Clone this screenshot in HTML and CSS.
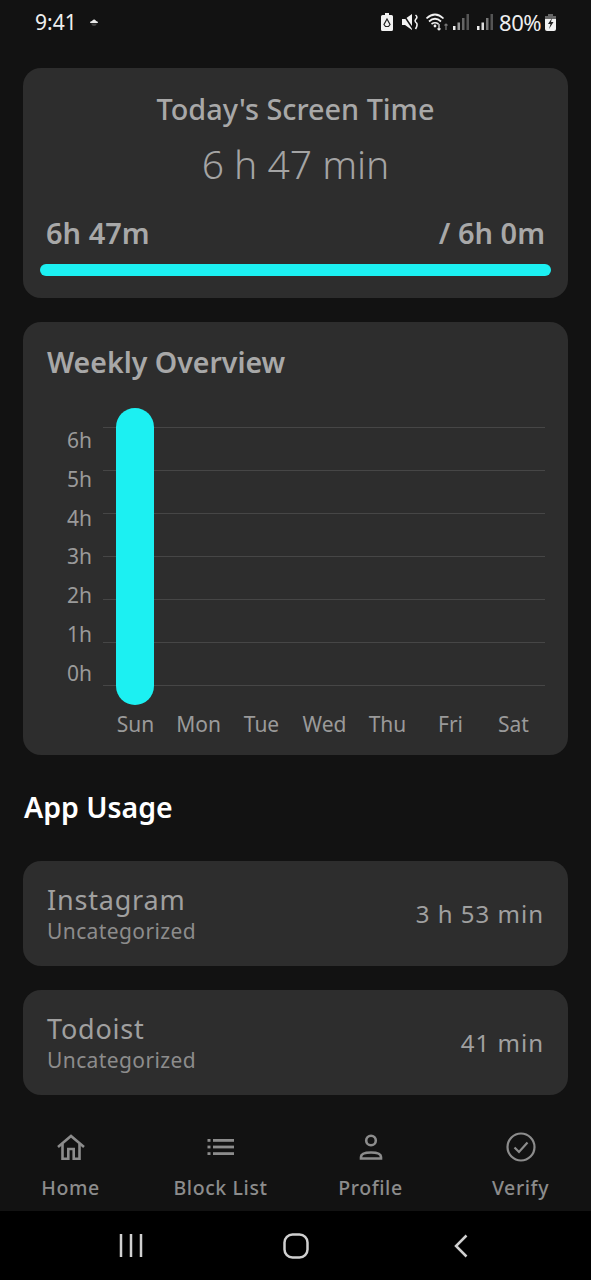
FILE: index.html
```html
<!DOCTYPE html>
<html lang="en">
  <head>
    <meta charset="UTF-8" />
    <meta name="viewport" content="width=device-width, initial-scale=1.0" />
    <title>Screen Time</title>
    <link rel="stylesheet" href="styles.css">
  </head>
  <body>
    <div class="status-bar">
      <div class="status-left">
        <span class="clock">9:41</span>
        <svg class="cloud" width="10" height="8" viewBox="0 0 10 8"><path d="M1 5 Q1 3 3 3 Q4 1 5.500 1.500 Q7 2 7 3 Q9 3 9 5 Z" fill="#e8e8e8"/><path d="M2 5.500 H8 Q7 8 5 8 Q3 8 2 5.500 Z" fill="#444"/></svg>
      </div>
      <div class="status-right">
        <svg width="12" height="18" viewBox="0 0 12 18"><path d="M4 0 H8 V2 H10.500 Q12 2 12 3.500 V16.500 Q12 18 10.500 18 H1.500 Q0 18 0 16.500 V3.500 Q0 2 1.500 2 H4 Z" fill="#f2f2f2"/><path d="M6 6 L9 11.500 L7.500 13.500 H4.500 L3 11.500 Z" fill="none" stroke="#222" stroke-width="1.200"/></svg>
        <svg class="gap-9" width="16" height="16" viewBox="0 0 16 16"><path d="M0 5 H3 L10 0 V16 L3 11 H0 Z" fill="#f2f2f2"/><path d="M1 0 L11 15" stroke="#121212" stroke-width="1.500"/><path d="M13.500 1 Q16 3 14 5 Q12 7 14.500 9 Q16 11 13.500 15" fill="none" stroke="#f2f2f2" stroke-width="1.600"/></svg>
        <svg class="gap-8" width="23" height="18" viewBox="0 0 23 18"><g fill="none" stroke="#f0f0f0" stroke-width="1.700"><path d="M0.500 5.500 Q9 -2.500 17.500 5.500"/><path d="M3 8.500 Q9 3 15 8.500"/><path d="M5.500 11 Q9 8.500 12.500 11"/></g><circle cx="9" cy="13" r="1.400" fill="#f0f0f0"/><path d="M20 17 V11 M18.500 12.500 L20 11 L21.500 12.500" fill="none" stroke="#777" stroke-width="1.200"/><path d="M13 11 V17 M11.500 15.500 L13 17 L14.500 15.500" fill="none" stroke="#eee" stroke-width="1.200"/></svg>
        <svg class="gap-4" width="16" height="16" viewBox="0 0 16 16"><rect x="0" y="12" width="2.500" height="4" fill="#eee"/><rect x="4.500" y="8.500" width="2.500" height="7.500" fill="#999"/><rect x="9" y="4" width="2.500" height="12" fill="#666"/><rect x="13.500" y="0" width="2.500" height="16" fill="#555"/></svg>
        <svg class="gap-8" width="16" height="16" viewBox="0 0 16 16"><rect x="0" y="12" width="2.500" height="4" fill="#eee"/><rect x="4.500" y="8.500" width="2.500" height="7.500" fill="#ddd"/><rect x="9" y="4" width="2.500" height="12" fill="#777"/><rect x="13.500" y="0" width="2.500" height="16" fill="#555"/></svg>
        <span class="battery-pct">80%</span>
        <svg width="11" height="17" viewBox="0 0 11 17"><path d="M3 0 H8 V2 H11 V5 H0 V2 H3 Z" fill="#666"/><path d="M0 5 H11 V15 Q11 17 9 17 H2 Q0 17 0 15 Z" fill="#f2f2f2"/><path d="M7 4 L3 10 H5.500 L4 15 L8.500 8 H6 Z" fill="#222"/></svg>
      </div>
    </div>

    <main class="content">
      <section class="card today">
        <h2 class="today-title">Today's Screen Time</h2>
        <div class="today-time">6 h 47 min</div>
        <div class="today-row">
          <span>6h 47m</span>
          <span>/ 6h 0m</span>
        </div>
        <div class="progress"></div>
      </section>

      <section class="card weekly">
        <h2 class="weekly-title">Weekly Overview</h2>
        <div class="chart">
          <div class="y-labels">
            <span>6h</span>
            <span>5h</span>
            <span>4h</span>
            <span>3h</span>
            <span>2h</span>
            <span>1h</span>
            <span>0h</span>
          </div>
          <div class="plot">
            <div class="line"></div>
            <div class="line"></div>
            <div class="line"></div>
            <div class="line"></div>
            <div class="line"></div>
            <div class="line"></div>
            <div class="line"></div>
            <div class="bar"></div>
          </div>
        </div>
        <div class="days">
          <span>Sun</span>
          <span>Mon</span>
          <span>Tue</span>
          <span>Wed</span>
          <span>Thu</span>
          <span>Fri</span>
          <span>Sat</span>
        </div>
      </section>

      <h2 class="usage-title">App Usage</h2>

      <section class="card app">
        <div>
          <div class="app-name">Instagram</div>
          <div class="app-cat">Uncategorized</div>
        </div>
        <div class="app-time">3 h 53 min</div>
      </section>

      <section class="card app">
        <div>
          <div class="app-name">Todoist</div>
          <div class="app-cat">Uncategorized</div>
        </div>
        <div class="app-time">41 min</div>
      </section>
    </main>

    <nav class="tabs">
      <div class="tab">
        <svg width="30" height="30" viewBox="0 0 30 30" fill="none" stroke="#8c8c8c" stroke-width="2.600"><path d="M2 15 L15 4 L28 15"/><path d="M6.500 12 V26.700 H12.300 V17 H17.700 V26.700 H23.500 V12"/></svg>
        <span>Home</span>
      </div>
      <div class="tab">
        <svg width="30" height="30" viewBox="0 0 30 30" fill="#8c8c8c"><rect x="1.500" y="7" width="3" height="2.800"/><rect x="7" y="7" width="21" height="2.800"/><rect x="1.500" y="13.600" width="3" height="2.800"/><rect x="7" y="13.600" width="21" height="2.800"/><rect x="1.500" y="20.200" width="3" height="2.800"/><rect x="7" y="20.200" width="21" height="2.800"/></svg>
        <span>Block List</span>
      </div>
      <div class="tab">
        <svg width="30" height="30" viewBox="0 0 30 30" fill="none" stroke="#8c8c8c" stroke-width="2.600"><circle cx="15" cy="8.500" r="4.800"/><path d="M5 26.500 V25 Q5 20.500 15 20.500 Q25 20.500 25 25 V26.500 Z"/></svg>
        <span>Profile</span>
      </div>
      <div class="tab">
        <svg width="30" height="30" viewBox="0 0 30 30" fill="none" stroke="#8c8c8c" stroke-width="2.200"><circle cx="15" cy="15" r="13.500"/><path d="M8.500 15.500 L13 20 L21.500 10.500"/></svg>
        <span>Verify</span>
      </div>
    </nav>

    <div class="system-nav">
      <svg width="24" height="23" viewBox="0 0 24 23" fill="none" stroke="#d0d0d0" stroke-width="2.500"><path d="M2 0 V23 M12 0 V23 M22 0 V23"/></svg>
      <svg width="26" height="26" viewBox="0 0 26 26" fill="none" stroke="#d0d0d0" stroke-width="2.500"><rect x="1.500" y="1.500" width="23" height="23" rx="8"/></svg>
      <svg width="15" height="24" viewBox="0 0 15 24" fill="none" stroke="#d0d0d0" stroke-width="2.500"><path d="M13.500 1.500 L3 12 L13.500 22.500"/></svg>
    </div>
  </body>
</html>
```

FILE: styles.css
```css
* {
  box-sizing: border-box;
}

body {
  font-family: "Noto Sans", sans-serif;
  background-color: #121212;
  margin: 0;
  padding: 0;
  width: 591px;
  height: 1280px;
  overflow: hidden;
  display: flex;
  flex-direction: column;
}

h2 {
  margin: 0;
  font-weight: 500;
}

.status-bar {
  height: 44px;
  flex: none;
  display: flex;
  justify-content: space-between;
  align-items: center;
  padding: 0 35px;
}

.status-left,
.status-right {
  display: flex;
  align-items: center;
}

.clock {
  font-size: 21px;
  color: #eeeeee;
}

.cloud {
  margin-left: 12px;
}

.gap-4 {
  margin-left: 4px;
}

.gap-8 {
  margin-left: 8px;
}

.gap-9 {
  margin-left: 9px;
}

.battery-pct {
  font-size: 22px;
  color: #eeeeee;
  margin-left: 6px;
  margin-right: 4px;
  letter-spacing: -0.5px;
}

.content {
  flex: 1;
  padding: 24px 23px 0;
}

.card {
  background: #2d2d2d;
  border-radius: 18px;
}

.today {
  height: 230px;
  padding: 20px 17px 0;
  margin-bottom: 24px;
  color: #a8a8a8;
}

.today-title {
  font-size: 28.8px;
  line-height: 42px;
  text-align: center;
  color: #a8a8a8;
}

.today-time {
  font-size: 39px;
  font-weight: 300;
  line-height: 56px;
  margin-top: 6px;
  text-align: center;
  color: #a4a4a4;
}

.today-row {
  display: flex;
  justify-content: space-between;
  padding: 0 6px;
  margin-top: 21px;
  font-size: 29px;
  font-weight: 600;
  line-height: 40px;
}

.progress {
  height: 12px;
  margin-top: 11px;
  border-radius: 6px;
  background: #1cf0f2;
}

.weekly {
  height: 433px;
  padding: 19px 23px 0 24px;
  margin-bottom: 31px;
}

.weekly-title {
  font-size: 28.5px;
  font-weight: 600;
  line-height: 42px;
  color: #a8a8a8;
}

.chart {
  display: flex;
  margin-top: 44px;
}

.y-labels {
  width: 45px;
  margin-top: -6px;
  display: flex;
  flex-direction: column;
  align-items: flex-end;
  font-size: 21px;
  line-height: 38.8px;
  color: #9a9a9a;
}

.plot {
  position: relative;
  margin-left: 11px;
  flex: 1;
  height: 259px;
  display: flex;
  flex-direction: column;
  justify-content: space-between;
}

.line {
  height: 1px;
  background: #464646;
}

.bar {
  position: absolute;
  left: 13px;
  top: -19px;
  width: 38px;
  height: 297px;
  border-radius: 19px;
  background: #1cf0f2;
}

.days {
  display: grid;
  grid-template-columns: repeat(7, 63px);
  padding-left: 57px;
  margin-top: 17px;
  text-align: center;
  font-size: 21px;
  line-height: 28px;
  color: #9a9a9a;
}

.usage-title {
  font-size: 28.5px;
  font-weight: 600;
  line-height: 42px;
  color: #ffffff;
  margin-bottom: 33px;
  padding-left: 1px;
}

.app {
  height: 105px;
  padding: 0 24px;
  margin-bottom: 24px;
  display: flex;
  justify-content: space-between;
  align-items: center;
}

.app-name {
  font-size: 27px;
  line-height: 34px;
  letter-spacing: 0.8px;
  color: #a0a0a0;
}

.app-cat {
  font-size: 21px;
  line-height: 28px;
  letter-spacing: 0.4px;
  color: #8c8c8c;
}

.app-time {
  font-size: 24px;
  letter-spacing: 1px;
  color: #a0a0a0;
}

.tabs {
  flex: none;
  height: 91px;
  display: flex;
  justify-content: center;
  padding-top: 12px;
}

.tab {
  flex: none;
  width: 150px;
  display: flex;
  flex-direction: column;
  align-items: center;
  gap: 12px;
  font-size: 19.5px;
  line-height: 27px;
  font-weight: 500;
  letter-spacing: 0.6px;
  color: #8c8c8c;
}

.system-nav {
  flex: none;
  height: 69px;
  background: #000000;
  display: grid;
  grid-template-columns: repeat(3, 165px);
  justify-content: center;
  justify-items: center;
  align-items: center;
}
```
